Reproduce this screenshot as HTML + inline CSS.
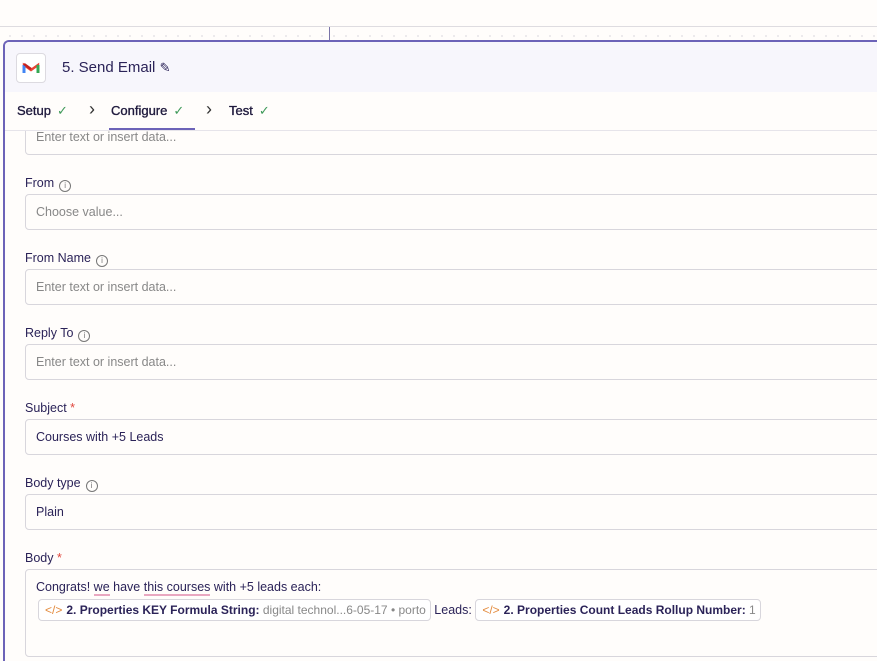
<!DOCTYPE html>
<html><head><style>
*{box-sizing:border-box;margin:0;padding:0}
html,body{width:877px;height:661px;overflow:hidden}
body{background:#fffdfb;font-family:"Liberation Sans",sans-serif;position:relative;color:#2b2358}
.top{position:absolute;left:0;top:0;width:877px;height:27px;background:#fffdfb;border-bottom:1px solid #dedce0}
.dots{position:absolute;left:0;top:28px;width:877px;height:12px;background-image:radial-gradient(#e0dee2 0.7px,transparent 1px);background-size:12px 12px;background-position:4px 2px}
.vl{position:absolute;left:329px;top:27px;width:1px;height:13px;background:#7a74a8}
.panel{position:absolute;left:3px;top:40px;width:874px;height:621px;border:2px solid #6c63b8;border-right:none;border-bottom:none;border-radius:6px 0 0 0;background:#fffdfb;overflow:hidden}
.head{position:absolute;left:0;top:0;width:100%;height:50px;background:#f7f6fc}
.logo{position:absolute;left:11px;top:11px;width:30px;height:30px;border:1px solid #dcdae0;border-radius:4px;background:#fff}
.title{position:absolute;left:57px;top:17px;font-size:15px;color:#2b2358}
.tabs{position:absolute;left:0;top:50px;width:100%;height:39px;border-bottom:1px solid #e6e4ea;font-size:13px;background:#fffdfb;z-index:2}
.tab{position:absolute;top:11px;color:#1f1a3d;-webkit-text-stroke:0.35px #1f1a3d}
.ck{color:#3f9a5a;margin-left:6px;-webkit-text-stroke:0}
.ul{position:absolute;left:104px;top:36px;width:86px;height:2px;background:#6c63b8}
.chev{position:absolute;top:7px;color:#333;font-size:18px}
.lbl{position:absolute;left:25px;font-size:12.5px;color:#2b2358}
.lbl .i{display:inline-block;width:12px;height:12px;border:1px solid #777;border-radius:50%;font-size:8px;text-align:center;line-height:10px;color:#777;margin-left:5px;vertical-align:-1px}
.star{color:#e0463c}
.inp{position:absolute;left:25px;width:880px;height:36px;border:1px solid #d8d6dc;border-radius:4px;background:#fffdfb;font-size:12.5px;padding:10px 0 0 10px;color:#888}
.inp.v{color:#2b2358}
.pill{display:inline-block;border:1px solid #d8d6dc;border-radius:4px;padding:3px 4px 3px 6px;font-size:12px;color:#2b2358;font-weight:bold;background:#fff}
.pill .c{color:#e38a3c;font-weight:normal;margin-right:4px}
.pill .g{color:#888;font-weight:normal}
</style></head><body>
<div class="top"></div>
<div class="dots"></div>
<div class="vl"></div>
<div class="panel">
 <div class="head">
  <div class="logo"><svg width="28" height="28" viewBox="0 0 28 28"><path d="M7 19V11l7 5 7-5v8" fill="none" stroke="#ea4335" stroke-width="2.4"/><path d="M7 19V11" stroke="#4285f4" stroke-width="3"/><path d="M21 19V11" stroke="#34a853" stroke-width="3"/><path d="M7 10l7 5" stroke="#c5221f" stroke-width="2.4"/></svg></div>
  <div class="title">5. Send Email <span style="font-size:13px">✎</span></div>
 </div>
 <div class="tabs">
  <div class="tab" style="left:12px">Setup<span class="ck">✓</span></div>
  <div class="chev" style="left:84px">&#x203A;</div>
  <div class="tab" style="left:106px">Configure<span class="ck">✓</span></div>
  <div class="chev" style="left:201px">&#x203A;</div>
  <div class="tab" style="left:224px">Test<span class="ck">✓</span></div>
  <div class="ul"></div>
 </div>
</div>
<div style="position:absolute;left:25px;top:131px;width:880px;height:24px;border:1px solid #d8d6dc;border-top:none;border-radius:0 0 0 4px;font-size:12.5px;color:#888;padding:0 0 0 10px;line-height:14px;overflow:hidden"><div style="margin-top:-1px">Enter text or insert data...</div></div>
<div class="lbl" style="top:176px">From<span class="i">i</span></div>
<div class="inp" style="top:194px">Choose value...</div>
<div class="lbl" style="top:251px">From Name<span class="i">i</span></div>
<div class="inp" style="top:269px">Enter text or insert data...</div>
<div class="lbl" style="top:326px">Reply To<span class="i">i</span></div>
<div class="inp" style="top:344px">Enter text or insert data...</div>
<div class="lbl" style="top:401px">Subject <span class="star">*</span></div>
<div class="inp v" style="top:419px">Courses with +5 Leads</div>
<div class="lbl" style="top:476px">Body type<span class="i">i</span></div>
<div class="inp v" style="top:494px">Plain</div>
<div class="lbl" style="top:551px">Body <span class="star">*</span></div>
<div class="inp v" style="top:569px;height:88px;padding-top:10px">
 <div>Congrats! <span style="border-bottom:2px solid #e9a7c0">we</span> have <span style="border-bottom:2px solid #e9a7c0">this courses</span> with +5 leads each:</div>
 <div style="margin-top:5px;margin-left:2px"><span class="pill"><span class="c">&lt;/&gt;</span>2. Properties KEY Formula String: <span class="g">digital technol...6-05-17 • porto</span></span> Leads: <span class="pill"><span class="c">&lt;/&gt;</span>2. Properties Count Leads Rollup Number: <span class="g">1</span></span></div>
</div>
</body></html>
